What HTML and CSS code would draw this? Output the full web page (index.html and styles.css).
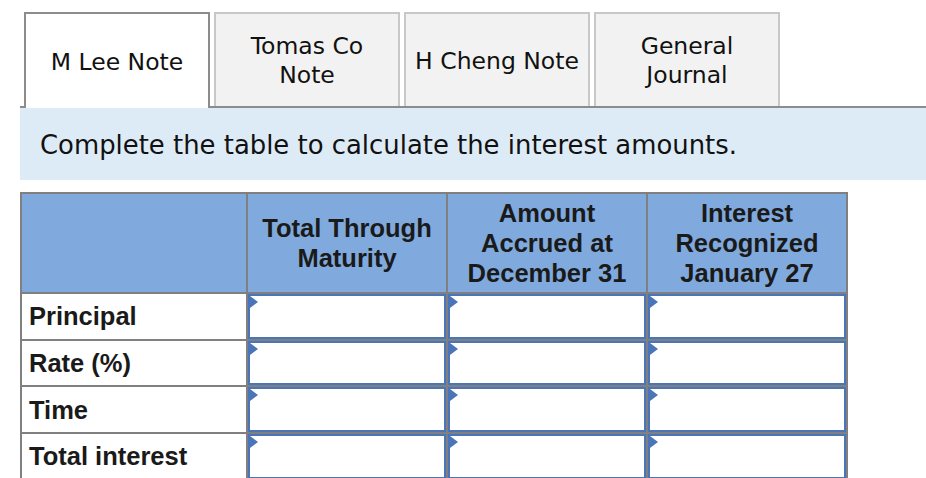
FILE: index.html
```html
<!DOCTYPE html>
<html>
<head>
<meta charset="utf-8">
<link rel="stylesheet" href="styles.css">
</head>
<body>
<div class="page">
  <div class="tabs">
    <div class="tab active">M Lee Note</div>
    <div class="tab">Tomas Co<br>Note</div>
    <div class="tab">H Cheng Note</div>
    <div class="tab">General<br>Journal</div>
  </div>
  <div class="band">Complete the table to calculate the interest amounts.</div>
  <table class="grid">
    <thead>
      <tr>
        <th class="c1"></th>
        <th class="cx">Total Through<br>Maturity</th>
        <th class="cx">Amount<br>Accrued at<br>December 31</th>
        <th class="cx">Interest<br>Recognized<br>January 27</th>
      </tr>
    </thead>
    <tbody>
      <tr>
        <td class="label">Principal</td>
        <td class="in"><div class="inp"></div></td>
        <td class="in"><div class="inp"></div></td>
        <td class="in"><div class="inp"></div></td>
      </tr>
      <tr>
        <td class="label">Rate (%)</td>
        <td class="in"><div class="inp"></div></td>
        <td class="in"><div class="inp"></div></td>
        <td class="in"><div class="inp"></div></td>
      </tr>
      <tr>
        <td class="label">Time</td>
        <td class="in"><div class="inp"></div></td>
        <td class="in"><div class="inp"></div></td>
        <td class="in"><div class="inp"></div></td>
      </tr>
      <tr>
        <td class="label">Total interest</td>
        <td class="in"><div class="inp"></div></td>
        <td class="in"><div class="inp"></div></td>
        <td class="in"><div class="inp"></div></td>
      </tr>
    </tbody>
  </table>
</div>
</body>
</html>
```
FILE: styles.css
```css
html, body {
  margin: 0;
  padding: 0;
  background: #ffffff;
  overflow: hidden;
}
.page {
  padding: 12px 0 0 20px;
}
.tabs {
  display: flex;
  align-items: flex-end;
  border-bottom: 2px solid #8c8c8c;
  height: 94px;
}
.tab {
  box-sizing: border-box;
  width: 186px;
  height: 94px;
  margin-left: 4px;
  border: 2px solid #c8c8c8;
  border-bottom: none;
  background: #f2f2f2;
  display: flex;
  align-items: center;
  justify-content: center;
  text-align: center;
  font-family: "DejaVu Sans", Verdana, sans-serif;
  font-size: 23.5px;
  line-height: 29px;
  color: #111111;
  padding-top: 2px;
}
.tab.active {
  background: #ffffff;
  border-color: #8c8c8c;
  height: 96px;
  margin-bottom: -2px;
}
.band {
  background: #ddebf7;
  height: 72px;
  display: flex;
  align-items: center;
  padding-left: 20px;
  padding-top: 1px;
  box-sizing: border-box;
  font-family: "DejaVu Sans", Verdana, sans-serif;
  font-size: 25.9px;
  color: #111111;
}
.grid {
  margin-top: 12px;
  border-collapse: separate;
  border-spacing: 0;
  border-top: 2px solid #808080;
  border-left: 2px solid #808080;
  table-layout: fixed;
  font-family: "Liberation Sans", Arial, sans-serif;
  font-size: 25.5px;
  font-weight: bold;
  color: #1a1a1a;
}
.grid th, .grid td {
  border-right: 2px solid #808080;
  border-bottom: 2px solid #808080;
  padding: 0;
}
.grid th {
  background: #80aade;
  height: 98px;
  line-height: 30px;
  text-align: center;
  vertical-align: middle;
  font-weight: bold;
}
.c1 { width: 224px; }
.cx { width: 198px; }
.label {
  padding-left: 7px !important;
  vertical-align: middle;
  line-height: 30px;
}
.in {
  vertical-align: top;
}
.inp {
  position: relative;
  box-sizing: border-box;
  height: 44.7px;
  border: 2px solid #4a76b9;
  background: #ffffff;
}
.inp::before {
  content: "";
  position: absolute;
  left: 0;
  top: 0;
  width: 0;
  height: 0;
  border-top: 6px solid transparent;
  border-bottom: 6px solid transparent;
  border-left: 8px solid #4a76b9;
}
```
